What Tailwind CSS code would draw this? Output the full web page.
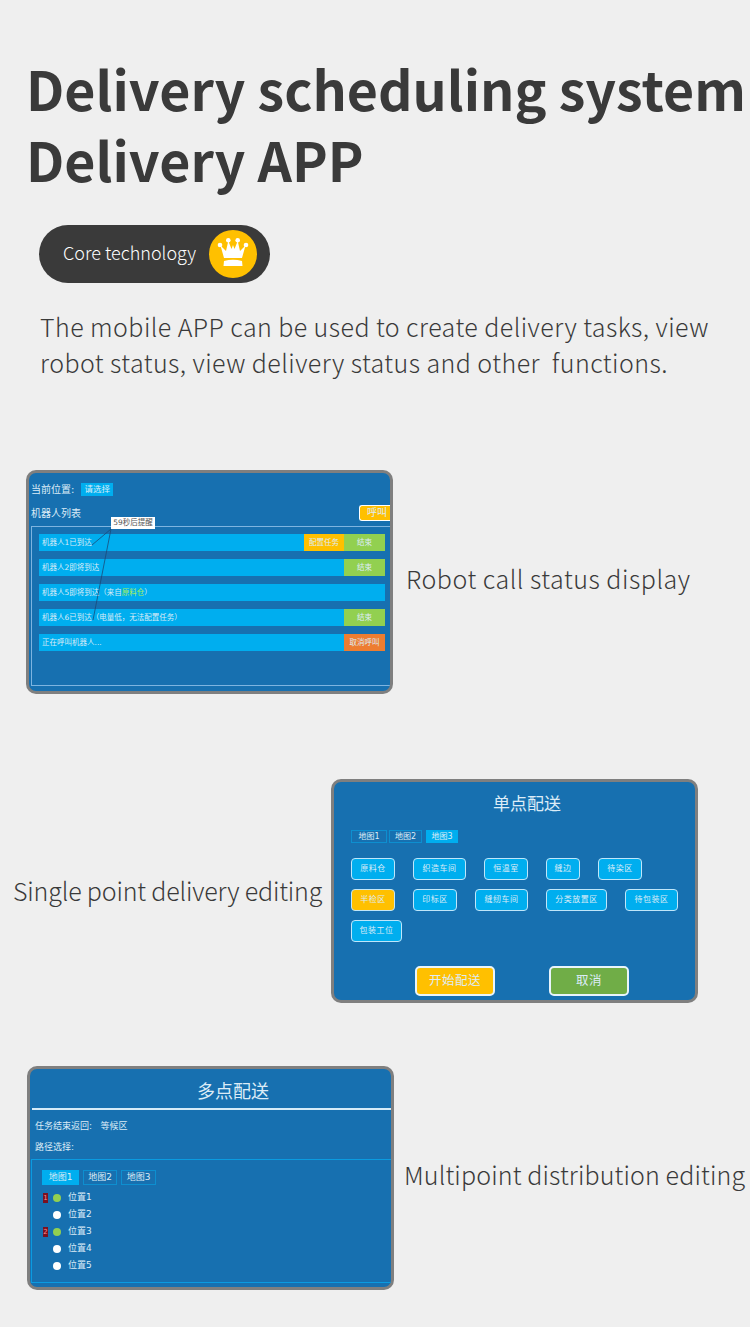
<!DOCTYPE html>
<html lang="en">
  <head>
    <meta charset="UTF-8" />
    <meta name="viewport" content="width=device-width, initial-scale=1.0" />
    <title>Delivery scheduling system</title>
    <script src="https://cdn.jsdelivr.net/npm/@tailwindcss/browser@4"></script>
  </head>
  <body class="w-[750px] h-[1327px] overflow-hidden bg-[#efefef] text-[#3a3a3a] font-['Noto_Sans_CJK_SC','Noto_Sans',sans-serif]">
    <!-- header -->
    <header class="pt-[52px]">
      <h1 class="ml-[26px] text-[53.700px] leading-[71px] font-bold whitespace-nowrap">Delivery scheduling system<br />Delivery APP</h1>
      <div class="ml-[39px] mt-[31px] w-[231px] h-[58px] rounded-full bg-[#3a3a3a] flex items-center pl-[24px] pr-[13px] justify-between">
        <span class="pb-[4px] text-white text-[18px] font-light whitespace-nowrap">Core technology</span>
        <span class="w-[48px] h-[48px] rounded-full bg-[#ffc000] flex items-center justify-center">
          <svg width="32" height="32" viewBox="0 0 32 32" fill="#fff">
            <circle cx="3" cy="7" r="2.300" />
            <circle cx="11.300" cy="2.300" r="2.300" />
            <circle cx="20.700" cy="2.300" r="2.300" />
            <circle cx="29" cy="7" r="2.300" />
            <path d="M3.500 7.500 L9 13 L11.300 3 L14.500 11 L16 7 L17.500 11 L20.700 3 L23 13 L28.500 7.500 L25 20 L7 20 Z" />
            <path d="M7 23 Q16 20.500 25 23 L25.500 28 L6.500 28 Z" />
          </svg>
        </span>
      </div>
      <p class="ml-[40px] mt-[25px] text-[25px] leading-[36px] tracking-[0.44px] font-light whitespace-pre">The mobile APP can be used to create delivery tasks, view
robot status, view delivery status and other  functions.</p>
    </header>

    <!-- robot call status -->
    <section class="mt-[90px] ml-[26px] flex items-center gap-[13px]">
      <div class="relative w-[367px] h-[224px] shrink-0 overflow-hidden rounded-[10px] border-[3px] border-[#7f7f7f] bg-[#1770b0] text-[#dcecf7] font-['DejaVu_Sans','Noto_Sans_CJK_SC',sans-serif]">
        <div class="pt-[10px] pl-[2px] flex items-center h-[23px] text-[10px]">
          <span>当前位置:</span>
          <span class="ml-[7px] w-[32px] h-[13px] bg-[#00aeef] text-[8.500px] leading-[13px] text-center">请选择</span>
        </div>
        <div class="mt-[9px] h-[16px] flex items-center justify-between pl-[2px] text-[10px]">
          <span>机器人列表</span>
          <span class="w-[31px] h-[16px] bg-[#ffc000] border-y border-l border-white rounded-l-[3px] text-[10px] leading-[14px] text-right pr-[3px]">呼叫</span>
        </div>
        <div class="mt-[5px] ml-[2px] w-[370px] h-[160px] border border-[#7db4e0] pt-[7px] pl-[7px] flex flex-col gap-[8px] text-[7.500px]">
          <div class="w-[346px] h-[17px] bg-[#00aeef] flex items-center">
            <span class="pl-[3px] flex-1">机器人1已到达</span>
            <span class="w-[40px] h-full bg-[#ffc000] flex items-center justify-center">配置任务</span>
            <span class="w-[41px] h-full bg-[#92d050] flex items-center justify-center">结束</span>
          </div>
          <div class="w-[346px] h-[17px] bg-[#00aeef] flex items-center">
            <span class="pl-[3px] flex-1">机器人2即将到达</span>
            <span class="w-[41px] h-full bg-[#92d050] flex items-center justify-center">结束</span>
          </div>
          <div class="w-[346px] h-[17px] bg-[#00aeef] flex items-center">
            <span class="pl-[3px] flex-1">机器人5即将到达（来自<span class="text-[#a6f05a]">原料仓</span>）</span>
          </div>
          <div class="w-[346px] h-[17px] bg-[#00aeef] flex items-center">
            <span class="pl-[3px] flex-1">机器人6已到达（电量低，无法配置任务）</span>
            <span class="w-[41px] h-full bg-[#92d050] flex items-center justify-center">结束</span>
          </div>
          <div class="w-[346px] h-[17px] bg-[#00aeef] flex items-center">
            <span class="pl-[3px] flex-1">正在呼叫机器人...</span>
            <span class="w-[41px] h-full bg-[#ed7d31] flex items-center justify-center">取消呼叫</span>
          </div>
        </div>
        <!-- tooltip with leader lines -->
        <svg class="absolute left-0 top-0" width="361" height="218" fill="none" stroke="#1a4a7a" stroke-width="0.8">
          <path d="M82 56 L63 72 M82 56 L64 147" />
        </svg>
        <span class="absolute left-[82px] top-[44px] w-[44px] h-[12px] bg-white text-[#555] text-[7.500px] leading-[12px] text-center">59秒后提醒</span>
      </div>
      <p class="pb-[7px] text-[25px] tracking-[0.52px] font-light whitespace-nowrap">Robot call status display</p>
    </section>

    <!-- single point delivery -->
    <section class="mt-[85px] ml-[13px] flex items-center gap-[8px]">
      <p class="w-[310px] text-[25px] tracking-[-0.17px] font-light whitespace-nowrap">Single point delivery editing</p>
      <div class="w-[367px] h-[224px] shrink-0 overflow-hidden rounded-[10px] border-[3px] border-[#7f7f7f] bg-[#1770b0] text-[#dcecf7] font-['DejaVu_Sans','Noto_Sans_CJK_SC',sans-serif]">
        <h2 class="h-[45px] pl-[25px] flex items-center justify-center text-[17px]">单点配送</h2>
        <div class="mt-[3px] ml-[17px] flex gap-[2px] text-[8px] leading-[11px] text-center">
          <span class="w-[36px] h-[13px] border border-[#0d8fd0]">地图1</span>
          <span class="w-[33px] h-[13px] border border-[#0d8fd0]">地图2</span>
          <span class="ml-[2px] w-[32px] h-[13px] border border-[#00aeef] bg-[#00aeef]">地图3</span>
        </div>
        <div class="mt-[15px] ml-[17px] flex flex-col gap-[9px] text-[8px] tracking-[0.5px]">
          <div class="flex gap-[18px]">
            <span class="w-[44px] h-[22px] flex items-center justify-center rounded-[4px] border border-[#bfe6fa] bg-[#00aeef]">原料仓</span>
            <span class="w-[53px] h-[22px] flex items-center justify-center rounded-[4px] border border-[#bfe6fa] bg-[#00aeef]">织造车间</span>
            <span class="w-[44px] h-[22px] flex items-center justify-center rounded-[4px] border border-[#bfe6fa] bg-[#00aeef]">恒温室</span>
            <span class="w-[34px] h-[22px] flex items-center justify-center rounded-[4px] border border-[#bfe6fa] bg-[#00aeef]">缝边</span>
            <span class="w-[44px] h-[22px] flex items-center justify-center rounded-[4px] border border-[#bfe6fa] bg-[#00aeef]">待染区</span>
          </div>
          <div class="flex gap-[18px]">
            <span class="w-[44px] h-[22px] flex items-center justify-center rounded-[4px] border border-[#bfe6fa] bg-[#ffc000]">半检区</span>
            <span class="w-[44px] h-[22px] flex items-center justify-center rounded-[4px] border border-[#bfe6fa] bg-[#00aeef]">印标区</span>
            <span class="w-[53px] h-[22px] flex items-center justify-center rounded-[4px] border border-[#bfe6fa] bg-[#00aeef]">缝纫车间</span>
            <span class="w-[61px] h-[22px] flex items-center justify-center rounded-[4px] border border-[#bfe6fa] bg-[#00aeef]">分类放置区</span>
            <span class="w-[53px] h-[22px] flex items-center justify-center rounded-[4px] border border-[#bfe6fa] bg-[#00aeef]">待包装区</span>
          </div>
          <div class="flex gap-[18px]">
            <span class="w-[51px] h-[22px] flex items-center justify-center rounded-[4px] border border-[#bfe6fa] bg-[#00aeef]">包装工位</span>
          </div>
        </div>
        <div class="mt-[24px] ml-[81px] flex gap-[54px] text-[12.500px] tracking-[0.5px]">
          <span class="w-[80px] h-[30px] flex items-center justify-center rounded-[5px] border-2 border-[#e8f4fb] bg-[#ffc000]">开始配送</span>
          <span class="w-[80px] h-[30px] flex items-center justify-center rounded-[5px] border-2 border-[#e8f4fb] bg-[#70ad47]">取消</span>
        </div>
      </div>
    </section>

    <!-- multipoint delivery -->
    <section class="mt-[63px] ml-[27px] flex items-center gap-[10px]">
      <div class="w-[367px] h-[224px] shrink-0 overflow-hidden rounded-[10px] border-[3px] border-[#7f7f7f] bg-[#1770b0] text-[#dcecf7] font-['DejaVu_Sans','Noto_Sans_CJK_SC',sans-serif]">
        <h2 class="h-[39px] pl-[45px] pt-[5px] flex items-center justify-center text-[18px]">多点配送</h2>
        <div class="ml-[2px] h-[2px] bg-[#d5ebf8]"></div>
        <div class="pl-[5px] text-[9px] leading-[13px]">
          <p class="mt-[10px]">任务结束返回:&nbsp;&nbsp;&nbsp;等候区</p>
          <p class="mt-[8px]">路径选择:</p>
        </div>
        <div class="mt-[5px] ml-[1px] w-[370px] h-[124px] border border-[#0b9be0] pt-[10px] pl-[10px]">
          <div class="flex gap-[4px] text-[9px] leading-[13px] text-center">
            <span class="w-[37px] h-[15px] border border-[#00aeef] bg-[#00aeef]">地图1</span>
            <span class="w-[34px] h-[15px] border border-[#0d8fd0]">地图2</span>
            <span class="w-[35px] h-[15px] border border-[#0d8fd0]">地图3</span>
          </div>
          <ul class="mt-[4px] text-[9px]">
            <li class="h-[17px] flex items-center">
              <span class="ml-[1px] w-[5px] h-[10px] bg-[#7a1020] text-[#ff8a8a] text-[7px] leading-[10px] text-center">1</span>
              <span class="ml-[5px] w-[8px] h-[8px] rounded-full bg-[#92d050]"></span>
              <span class="ml-[7px]">位置1</span>
            </li>
            <li class="h-[17px] flex items-center">
              <span class="ml-[11px] w-[8px] h-[8px] rounded-full bg-white"></span>
              <span class="ml-[7px]">位置2</span>
            </li>
            <li class="h-[17px] flex items-center">
              <span class="ml-[1px] w-[5px] h-[10px] bg-[#7a1020] text-[#ff8a8a] text-[7px] leading-[10px] text-center">2</span>
              <span class="ml-[5px] w-[8px] h-[8px] rounded-full bg-[#92d050]"></span>
              <span class="ml-[7px]">位置3</span>
            </li>
            <li class="h-[17px] flex items-center">
              <span class="ml-[11px] w-[8px] h-[8px] rounded-full bg-white"></span>
              <span class="ml-[7px]">位置4</span>
            </li>
            <li class="h-[17px] flex items-center">
              <span class="ml-[11px] w-[8px] h-[8px] rounded-full bg-white"></span>
              <span class="ml-[7px]">位置5</span>
            </li>
          </ul>
        </div>
      </div>
      <p class="pb-[7px] text-[25px] tracking-[0.13px] font-light whitespace-nowrap">Multipoint distribution editing</p>
    </section>
  </body>
</html>
